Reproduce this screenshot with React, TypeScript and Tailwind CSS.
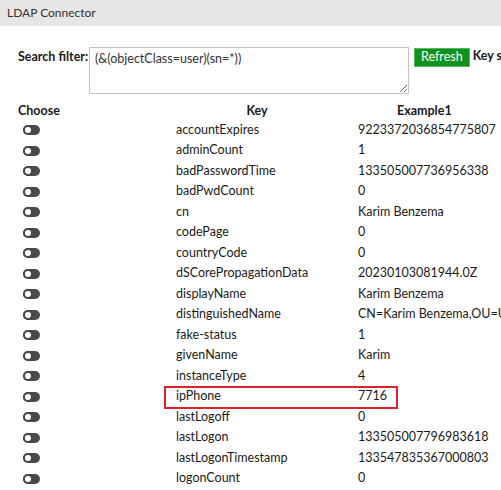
import React from "react";

const rows: [string, string][] = [
  ["accountExpires", "9223372036854775807"],
  ["adminCount", "1"],
  ["badPasswordTime", "133505007736956338"],
  ["badPwdCount", "0"],
  ["cn", "Karim Benzema"],
  ["codePage", "0"],
  ["countryCode", "0"],
  ["dSCorePropagationData", "20230103081944.0Z"],
  ["displayName", "Karim Benzema"],
  ["distinguishedName", "CN=Karim Benzema,OU=Users,DC=example,DC=com"],
  ["fake-status", "1"],
  ["givenName", "Karim"],
  ["instanceType", "4"],
  ["ipPhone", "7716"],
  ["lastLogoff", "0"],
  ["lastLogon", "133505007796983618"],
  ["lastLogonTimestamp", "133547835367000803"],
  ["logonCount", "0"],
];

function Toggle() {
  return (
    <span className="relative inline-block h-[10px] w-[17px] rounded-full bg-[#4a4a4a]">
      <span className="absolute left-0 top-0 h-[10px] w-[10px] rounded-full border-2 border-[#4a4a4a] bg-white" />
    </span>
  );
}

export default function App() {
  return (
    <div className="h-[490px] w-[501px] overflow-hidden bg-white text-[12.5px] text-[#1a1a1a] [font-family:Lato,'Liberation_Sans',sans-serif]">
      <div className="flex h-[26px] items-center bg-[#e6e6e6] px-[7px] text-[12px] text-[#333]">
        LDAP Connector
      </div>

      <div className="mt-[21px] flex items-start overflow-hidden pl-[18px]">
        <span className="mt-[1px] w-[71px] shrink-0 whitespace-nowrap font-bold">Search filter:</span>
        <textarea
          className="h-[47px] w-[320px] shrink-0 border border-[#c4c4c4] px-[5px] py-[2px] text-[12.5px] text-[#333] outline-none"
          defaultValue="(&(objectClass=user)(sn=*))"
        />
        <button className="ml-[5px] mt-[1px] h-[19px] shrink-0 border border-[#5cb85c] bg-[#0f931d] px-[6px] text-[12.5px] leading-none text-white">
          Refresh
        </button>
        <span className="ml-[3px] shrink-0 whitespace-nowrap font-bold">Key selection</span>
      </div>

      <div className="mt-[8px] flex h-[18px] items-center whitespace-nowrap font-bold">
        <span className="w-[164px] shrink-0 pl-[18px]">Choose</span>
        <span className="w-[194px] shrink-0 pr-[8px] text-center">Key</span>
        <span className="shrink-0 pl-[39px]">Example1</span>
      </div>

      <div className="flex flex-col">
        {rows.map(([k, v]) => (
          <div key={k} className="relative flex h-[20.5px] items-center whitespace-nowrap">
            <span className="flex w-[164px] shrink-0 pl-[23px]">
              <Toggle />
            </span>
            <span className="w-[194px] shrink-0 pl-[12px]">{k}</span>
            <span className="shrink-0">{v}</span>
            {k === "ipPhone" && (
              <span className="pointer-events-none absolute left-[164px] top-[-1px] h-[23px] w-[234px] border-2 border-[#e0202a]" />
            )}
          </div>
        ))}
      </div>
    </div>
  );
}
